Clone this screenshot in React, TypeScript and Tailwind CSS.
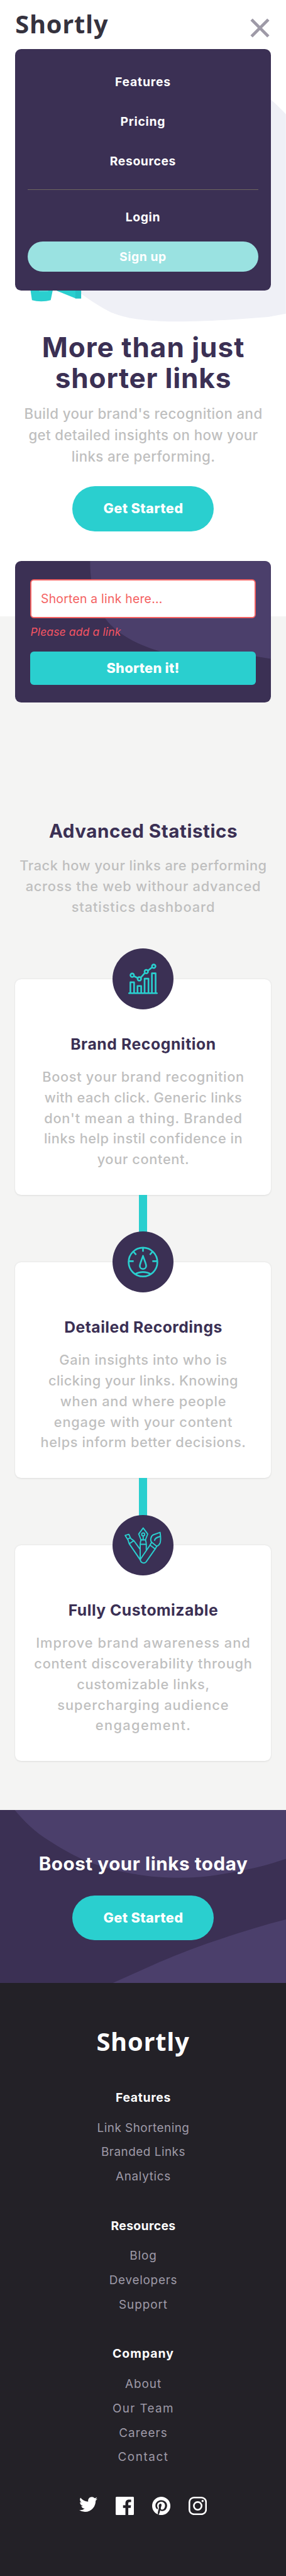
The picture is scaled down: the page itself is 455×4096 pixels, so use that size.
import type { ReactNode } from "react";

type Row = { text: string; cls: string };

const features: { title: Row; icon: ReactNode; lines: Row[] }[] = [
  {
    title: { text: "Brand Recognition", cls: "tracking-[0.61px]" },
    icon: <ChartIcon />,
    lines: [
      { text: "Boost your brand recognition", cls: "tracking-[0.69px]" },
      { text: "with each click. Generic links", cls: "tracking-[0.39px]" },
      { text: "don't mean a thing. Branded", cls: "tracking-[0.81px]" },
      { text: "links help instil confidence in", cls: "tracking-[0.5px]" },
      { text: "your content.", cls: "tracking-[0.63px]" },
    ],
  },
  {
    title: { text: "Detailed Recordings", cls: "tracking-[0.49px]" },
    icon: <GaugeIcon />,
    lines: [
      { text: "Gain insights into who is", cls: "tracking-[0.6px]" },
      { text: "clicking your links. Knowing", cls: "tracking-[0.43px]" },
      { text: "when and where people", cls: "tracking-[0.72px]" },
      { text: "engage with your content", cls: "tracking-[0.78px]" },
      { text: "helps inform better decisions.", cls: "tracking-[0.6px]" },
    ],
  },
  {
    title: { text: "Fully Customizable", cls: "tracking-[0.51px]" },
    icon: <PensIcon />,
    lines: [
      { text: "Improve brand awareness and", cls: "tracking-[1.02px]" },
      { text: "content discoverability through", cls: "tracking-[0.75px]" },
      { text: "customizable links,", cls: "tracking-[0.64px]" },
      { text: "supercharging audience", cls: "tracking-[0.97px]" },
      { text: "engagement.", cls: "tracking-[1.38px]" },
    ],
  },
];

const footerGroups: { title: Row; links: Row[] }[] = [
  {
    title: { text: "Features", cls: "tracking-[0.66px]" },
    links: [
      { text: "Link Shortening", cls: "tracking-[0.49px]" },
      { text: "Branded Links", cls: "tracking-[0.51px]" },
      { text: "Analytics", cls: "tracking-[0.69px]" },
    ],
  },
  {
    title: { text: "Resources", cls: "tracking-[0.35px]" },
    links: [
      { text: "Blog", cls: "tracking-[0.95px]" },
      { text: "Developers", cls: "tracking-[0.75px]" },
      { text: "Support", cls: "tracking-[0.98px]" },
    ],
  },
  {
    title: { text: "Company", cls: "tracking-[1.04px]" },
    links: [
      { text: "About", cls: "tracking-[0.98px]" },
      { text: "Our Team", cls: "tracking-[1.36px]" },
      { text: "Careers", cls: "tracking-[1.07px]" },
      { text: "Contact", cls: "tracking-[1.6px]" },
    ],
  },
];

function Lines({ rows }: { rows: Row[] }) {
  return (
    <>
      {rows.map((row) => (
        <span key={row.text} className={`block whitespace-nowrap ${row.cls}`}>
          {row.text}{" "}
        </span>
      ))}
    </>
  );
}

function ChartIcon() {
  return (
    <svg viewBox="0 0 100 100" className="size-full" fill="none" stroke="#2acfcf" strokeWidth="2.7" strokeLinejoin="round">
      <path d="M27.2 73.5H72.8" strokeLinecap="round" />
      <path d="M29.3 73V55.6H35.4V73M41 73V61.6H47V73M52.6 73V49.6H59V73M64.6 73V40.9H70.7V73" />
      <path d="M34.9 45.4L41.4 48.6M46.2 48L53.2 40.2M58 36.6L65.1 30.9" />
      <circle cx="32.3" cy="44" r="2.9" />
      <circle cx="44" cy="50" r="2.9" />
      <circle cx="55.4" cy="38.1" r="2.9" />
      <circle cx="67.6" cy="29.3" r="2.9" />
    </svg>
  );
}

function GaugeIcon() {
  return (
    <svg viewBox="0 0 100 100" className="size-full" fill="none" stroke="#2acfcf" strokeWidth="2.7" strokeLinejoin="round">
      <circle cx="50" cy="50.3" r="23.6" />
      <path d="M50 27V33.3M26 48.8H34.7M65.3 48.8H74M34.2 33.2L38.8 38.2M65.8 33.2L61.2 38.2" />
      <path d="M50 40C48.6 45.5 44.8 52.5 44.8 56.6A5.2 5 0 0 0 55.2 56.6C55.2 52.5 51.4 45.5 50 40Z" />
      <path d="M37.3 70.2C44.5 65.4 55.5 65.4 62.7 70.2" />
    </svg>
  );
}

function PensIcon() {
  return (
    <svg viewBox="0 0 100 100" className="size-full" fill="none" stroke="#2acfcf" strokeWidth="2" strokeLinejoin="round" strokeLinecap="round">
      <path d="M50.3 21.2L57.7 31L54 40.7H46.7L43 31Z" />
      <circle cx="50.3" cy="31.8" r="2.5" />
      <path d="M50.3 34.5V40.5M46.7 40.7C46 43 45.4 45 45.4 48H55.4C55.4 45 54.7 43 54 40.7M45.4 48V73.5M55.4 48V57" />
      <path d="M61.6 49.3L45.8 72.5A5.4 5.4 0 0 0 55 77L70 55.6" />
      <path d="M61.6 49.3L70 55.6L72.6 51.2L64.2 44.7Z" />
      <path d="M64.2 44.7C61.5 41.5 62.5 34.5 67.4 32.2L78 28.4C79 35 79.3 41 78.2 45.4C77 49 75.4 50.2 72.6 51.2" />
      <path d="M69 41.5C69.5 37.8 72.5 36.6 78.2 35" />
      <path d="M20.8 33.4L26.8 31.6L29.3 37.3L24.6 39.6ZM29.3 37.3C30.5 39.5 32.8 40.4 35 42L27.4 47C26.2 44.5 26.5 42 24.6 39.6M27.4 47L45.4 73.3M35 42L45.2 56" />
    </svg>
  );
}

function StartButton() {
  return (
    <button className="h-[74px] w-[231px] rounded-full bg-[#2acfcf] pl-px text-[22.5px] leading-[30px] font-extrabold tracking-[0.36px] text-white">
      Get Started
    </button>
  );
}

function Logo() {
  return <span className="font-['Open_Sans',sans-serif] text-[41px] leading-[50px] font-bold tracking-[0.8px]">Shortly</span>;
}

function Header() {
  return (
    <header className="relative z-20 flex h-20 items-start justify-between px-[25px] text-[#35323e]">
      <div className="pt-[14.5px]">
        <Logo />
      </div>
      <button aria-label="Close menu" className="mt-[30px] mr-[2px]">
        <svg viewBox="0 0 32 32" className="size-8" stroke="#9e9aa7" strokeWidth="5">
          <path d="M2.2 2.2L29.8 29.8M29.8 2.2L2.2 29.8" />
        </svg>
      </button>
      <nav className="absolute top-20 left-[25px] flex h-[396px] w-[419px] flex-col rounded-[10px] bg-[#3b3054] px-5 pt-10 text-center text-[20px] leading-[30px] font-bold text-white">
        <div className="flex flex-col gap-[35px]">
          <a className="tracking-[0.8px]">Features</a>
          <a className="tracking-[0.74px]">Pricing</a>
          <a className="tracking-[0.6px]">Resources</a>
        </div>
        <hr className="my-[30px] border-[#6e675f]" />
        <a className="tracking-[0.64px]">Login</a>
        <button className="mt-[25px] h-[49.5px] shrink-0 rounded-full bg-[#9ae2e1] font-bold tracking-[0.55px]">Sign up</button>
      </nav>
    </header>
  );
}

function HeroArt() {
  return (
    <svg viewBox="0 80 469 465" className="block h-[464.7px] w-full">
      <path
        d="M469 187C455 172 444 161 425 150L120 300L131 480C150 494 165 503 182 512C197 518 214 522 232 524C280 530 360 526 440 519.5L469 514Z"
        fill="#eff0f6"
      />
      <path d="M49 470H87.6L83 492C74 494.6 61 494.6 52.3 492Z" fill="#2acfcf" />
      <path d="M64 477H79" stroke="#6fdedd" />
      <path d="M80 470H124V489L94 477Z" fill="#2acfcf" />
      <path d="M123.5 470H133V489.3H123.5Z" fill="#25c2c5" />
    </svg>
  );
}

function ShortenForm() {
  return (
    <form className="relative z-10 mx-[25px] mt-[48.4px] -mb-[141.4px] grid h-[232.7px] overflow-hidden rounded-[10px] bg-[#3b3054]">
      <svg viewBox="0 0 419 232" className="col-start-1 row-start-1 h-full w-full">
        <path d="M123 0C123 32 129 66 148 94C175 131 233 149 272 156H395L419 160V0Z" fill="#4b3f6b" />
      </svg>
      <div className="col-start-1 row-start-1 flex flex-col px-[25px] pt-[30px]">
        <input
          className="h-16 rounded-md border-[2.1px] border-[#f46262] bg-white pl-[15px] text-[20px] tracking-[0.24px] outline-none placeholder:text-[#f46262]"
          placeholder="Shorten a link here..."
        />
        <em className="mt-[9px] h-[46px] text-[18px] leading-[26px] tracking-[0.17px] text-[#f45463]">Please add a link</em>
        <button type="button" className="h-[54px] rounded-md bg-[#2acfcf] text-[22.5px] font-extrabold tracking-[0.25px] text-white">
          Shorten it!
        </button>
      </div>
    </form>
  );
}

function Statistics() {
  return (
    <section className="bg-[#f4f4f3] px-[25px] pt-[332.1px] pb-[80.3px] text-center">
      <h2 className="pl-px text-[30.5px] leading-10 font-bold tracking-[0.56px] text-[#3b3054]">Advanced Statistics</h2>
      <p className="-mx-4 mt-[19.3px] pl-px text-[22.5px] leading-[34px] font-medium text-[#bfbfbf]">
        <Lines
          rows={[
            { text: "Track how your links are performing", cls: "tracking-[0.51px]" },
            { text: "across the web withour advanced", cls: "tracking-[0.75px]" },
            { text: "statistics dashboard", cls: "tracking-[0.91px]" },
          ]}
        />
      </p>
      <div className="mt-[101.2px] flex flex-col">
        {features.map((f, i) => (
          <div key={f.title.text} className="flex flex-col items-center">
            {i > 0 && <div className="h-[110.3px] w-[13px] bg-[#2acfcf]" />}
            <article className="flex h-[353.7px] w-full flex-col items-center rounded-[10px] bg-white shadow-[0_1px_3px_rgba(0,0,0,0.1)]">
              <div className="-mt-[50px] ml-px size-[100px] shrink-0 rounded-full bg-[#3b3054]">{f.icon}</div>
              <h3 className="mt-[39px] pl-px text-[25.5px] leading-9 font-bold text-[#3b3054]">
                <Lines rows={[f.title]} />
              </h3>
              <p className="mt-[18.7px] pl-px text-[22.5px] leading-[33.75px] font-medium text-[#bfbfbf]">
                <Lines rows={f.lines} />
              </p>
            </article>
          </div>
        ))}
      </div>
    </section>
  );
}

function Boost() {
  return (
    <section className="grid h-[284px] overflow-hidden bg-[#3b3054] text-center">
      <svg viewBox="0 0 469 284" className="col-start-1 row-start-1 h-full w-full">
        <path
          d="M24 0C39 18 57 36 80 50C100 63 115 71 133 80C153 88 169 94 187 98C204 102 218 105 233 107C253 110 273 111 293 111C315 111 334 110 353 107C374 104 394 100 413 96C432 92 452 86 469 80V0Z"
          fill="#4b3f6b"
        />
        <path d="M184 284L260 250C295 235 328 222 363 211C400 199 435 188 469 179.5V284Z" fill="#4b3f6b" />
      </svg>
      <div className="col-start-1 row-start-1 flex flex-col items-center pt-[66.5px]">
        <h2 className="mb-[29.5px] pl-px text-[30.5px] leading-[44px] font-bold tracking-[0.59px] text-white">Boost your links today</h2>
        <StartButton />
      </div>
    </section>
  );
}

function Footer() {
  return (
    <footer className="flex flex-1 flex-col items-center bg-[#232127] pt-[71px] text-center text-white">
      <Logo />
      <div className="mt-[51.8px] flex flex-col gap-[45px] pl-px">
        {footerGroups.map((g) => (
          <div key={g.title.text}>
            <h4 className="mb-[15px] text-[20px] leading-[30px] font-bold">
              <Lines rows={[g.title]} />
            </h4>
            <div className="text-[19.5px] leading-10 text-[#9e9aa7]">
              <Lines rows={g.links} />
            </div>
          </div>
        ))}
      </div>
      <div className="mt-[44.3px] flex gap-[30px]">
        <svg viewBox="0 0 24 24" className="size-[30px]" fill="white">
          <path d="M24 2.557a9.83 9.83 0 01-2.828.775A4.932 4.932 0 0023.337.608a9.864 9.864 0 01-3.127 1.195A4.916 4.916 0 0016.616.248c-3.179 0-5.515 2.966-4.797 6.045A13.978 13.978 0 011.671 1.149a4.93 4.93 0 001.523 6.574 4.903 4.903 0 01-2.229-.616c-.054 2.281 1.581 4.415 3.949 4.89a4.935 4.935 0 01-2.224.084 4.928 4.928 0 004.6 3.419A9.9 9.9 0 010 17.54a13.94 13.94 0 007.548 2.212c9.142 0 14.307-7.721 13.995-14.646A10.025 10.025 0 0024 2.557z" />
        </svg>
        <svg viewBox="0 0 24 24" className="size-[30px]" fill="white">
          <path d="M22.675 0H1.325C.593 0 0 .593 0 1.325v21.351C0 23.407.593 24 1.325 24H12.82v-9.294H9.692v-3.622h3.128V8.413c0-3.1 1.893-4.788 4.659-4.788 1.325 0 2.463.099 2.795.143v3.24l-1.918.001c-1.504 0-1.795.715-1.795 1.763v2.313h3.587l-.467 3.622h-3.12V24h6.116c.73 0 1.323-.593 1.323-1.325V1.325C24 .593 23.407 0 22.675 0z" />
        </svg>
        <svg viewBox="0 0 24 24" className="size-[30px]" fill="white">
          <path d="M12 0C5.373 0 0 5.372 0 12c0 5.084 3.163 9.426 7.627 11.174-.105-.949-.2-2.405.042-3.441.218-.937 1.407-5.965 1.407-5.965s-.359-.719-.359-1.782c0-1.668.967-2.914 2.171-2.914 1.023 0 1.518.769 1.518 1.69 0 1.029-.655 2.568-.994 3.995-.283 1.194.599 2.169 1.777 2.169 2.133 0 3.772-2.249 3.772-5.495 0-2.873-2.064-4.882-5.012-4.882-3.414 0-5.418 2.561-5.418 5.207 0 1.031.397 2.138.893 2.738a.36.36 0 01.083.345l-.333 1.36c-.053.22-.174.267-.402.161-1.499-.698-2.436-2.889-2.436-4.649 0-3.785 2.75-7.262 7.929-7.262 4.163 0 7.398 2.967 7.398 6.931 0 4.136-2.607 7.464-6.227 7.464-1.216 0-2.359-.631-2.75-1.378l-.748 2.853c-.271 1.043-1.002 2.35-1.492 3.146 1.124.347 2.317.535 3.554.535 6.627 0 12-5.373 12-12 0-6.628-5.373-12-12-12z" />
        </svg>
        <svg viewBox="0 0 24 24" className="size-[30px]" fill="none" stroke="white" strokeWidth="2.16">
          <rect x="1.08" y="1.08" width="21.84" height="21.84" rx="6" />
          <circle cx="12" cy="12" r="5.08" />
          <circle cx="18.41" cy="5.6" r="1.44" fill="white" stroke="none" />
        </svg>
      </div>
    </footer>
  );
}

export default function App() {
  return (
    <div className="flex h-[4223px] w-full flex-col overflow-hidden bg-white font-[Inter,sans-serif] [zoom:0.96993]">
      <Header />
      <section className="flex flex-col">
        <HeroArt />
        <div className="flex flex-col items-center text-center">
          <h1 className="pl-px text-[45.5px] leading-[50.5px] font-bold text-[#3b3054]">
            <Lines
              rows={[
                { text: "More than just", cls: "tracking-[0.98px]" },
                { text: "shorter links", cls: "tracking-[0.8px]" },
              ]}
            />
          </h1>
          <p className="mt-[15.3px] mb-[30.9px] pl-px text-[23px] leading-[35px] font-medium text-[#bfbfbf]">
            <Lines
              rows={[
                { text: "Build your brand's recognition and", cls: "tracking-[0.39px]" },
                { text: "get detailed insights on how your", cls: "tracking-[0.39px]" },
                { text: "links are performing.", cls: "tracking-[0.4px]" },
              ]}
            />
          </p>
          <StartButton />
        </div>
        <ShortenForm />
      </section>
      <Statistics />
      <Boost />
      <Footer />
    </div>
  );
}
